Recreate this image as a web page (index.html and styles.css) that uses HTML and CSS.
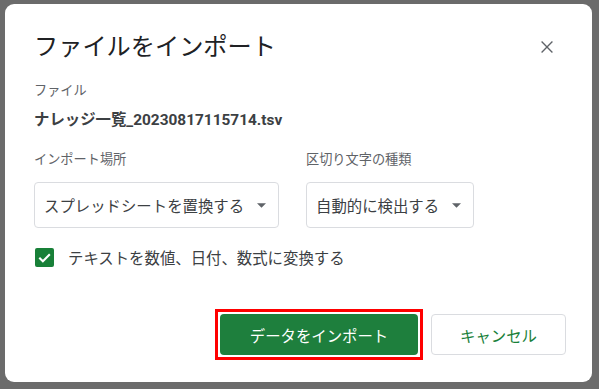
FILE: index.html
```html
<!DOCTYPE html>
<html lang="ja">
<head>
<meta charset="utf-8">
<link rel="stylesheet" href="styles.css">
</head>
<body>
<div class="dialog">
  <div class="header">
    <div class="title">ファイルをインポート</div>
    <svg class="close" viewBox="0 0 24 24" width="20" height="20"><path d="M5.5 5.5 L18.5 18.5 M18.5 5.5 L5.5 18.5" stroke="#5f6368" stroke-width="1.6" fill="none"/></svg>
  </div>
  <div class="label file-label">ファイル</div>
  <div class="filename">ナレッジ一覧_20230817115714.tsv</div>
  <div class="fields">
    <div class="field">
      <div class="label">インポート場所</div>
      <div class="select select-wide"><span>スプレッドシートを置換する</span><svg class="arrow" viewBox="0 0 10 5" width="9" height="5"><path d="M0 0 L10 0 L5 5 Z" fill="#5f6368"/></svg></div>
    </div>
    <div class="field">
      <div class="label">区切り文字の種類</div>
      <div class="select select-narrow"><span>自動的に検出する</span><svg class="arrow" viewBox="0 0 10 5" width="9" height="5"><path d="M0 0 L10 0 L5 5 Z" fill="#5f6368"/></svg></div>
    </div>
  </div>
  <div class="check-row">
    <div class="checkbox"><svg viewBox="0 0 20 20" width="19" height="19"><path d="M4.5 10.2 L8.3 14 L15.6 6.6" stroke="#fff" stroke-width="2.2" fill="none"/></svg></div>
    <div class="check-label">テキストを数値、日付、数式に変換する</div>
  </div>
  <div class="actions">
    <div class="highlight">
      <div class="btn primary">データをインポート</div>
    </div>
    <div class="btn secondary">キャンセル</div>
  </div>
</div>
</body>
</html>
```

FILE: styles.css
```css
html, body {
  margin: 0;
  padding: 0;
}
body {
  background: #6b6b6b;
  width: 599px;
  height: 389px;
  overflow: hidden;
  font-family: Roboto, "Noto Sans CJK JP", sans-serif;
}
.dialog {
  box-sizing: border-box;
  margin: 4px 0 0 5px;
  width: 587px;
  height: 378px;
  background: #fff;
  border-radius: 9px;
  padding: 27px 26px 0 29px;
}
.header {
  display: flex;
  justify-content: space-between;
  align-items: center;
  height: 32px;
  padding-right: 9px;
}
.title {
  font-size: 24.2px;
  line-height: 32px;
  color: #202124;
}
.close {
  display: block;
}
.label {
  font-size: 13.2px;
  line-height: 20px;
  color: #5f6368;
}
.file-label {
  margin-top: 18px;
}
.filename {
  margin-top: 9px;
  font-size: 15.4px;
  line-height: 20px;
  font-weight: bold;
  color: #3c4043;
}
.fields {
  display: flex;
  gap: 27px;
  margin-top: 20px;
}
.select {
  box-sizing: border-box;
  margin-top: 12px;
  height: 46px;
  border: 1px solid #dadce0;
  border-radius: 4px;
  display: flex;
  align-items: center;
  padding-left: 9px;
  font-size: 15.4px;
  color: #3c4043;
}
.select-wide {
  width: 245px;
}
.select-narrow {
  width: 168px;
}
.arrow {
  margin-left: 13px;
  margin-top: 1px;
}
.check-row {
  display: flex;
  align-items: center;
  margin-top: 19px;
  height: 20px;
}
.checkbox {
  width: 19px;
  height: 19px;
  background: #188038;
  border-radius: 2px;
  margin-left: 1px;
}
.checkbox svg {
  display: block;
}
.check-label {
  margin-left: 14px;
  font-size: 15.4px;
  color: #3c4043;
}
.actions {
  display: flex;
  justify-content: flex-end;
  align-items: center;
  gap: 8px;
  margin-top: 42px;
}
.highlight {
  border: 3px solid #ff0000;
  padding: 2px;
}
.btn {
  box-sizing: border-box;
  height: 41px;
  border-radius: 4px;
  display: flex;
  align-items: center;
  justify-content: center;
  font-size: 15.4px;
}
.primary {
  width: 198px;
  background: #1e7f3d;
  color: #fff;
}
.secondary {
  width: 135px;
  border: 1px solid #dadce0;
  color: #188038;
}
```
